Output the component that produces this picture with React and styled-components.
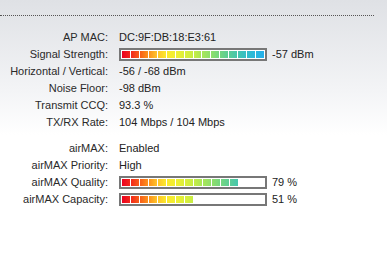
import React from 'react';
import styled, { createGlobalStyle } from 'styled-components';

const GlobalStyle = createGlobalStyle`
  html, body {
    margin: 0;
    padding: 0;
  }
  body {
    width: 387px;
    height: 260px;
    overflow: hidden;
    background: linear-gradient(to bottom, #dfe1e5 0px, #f3f4f6 90px, #ffffff 135px, #ffffff 260px);
    font-family: "Liberation Sans", Arial, sans-serif;
    font-size: 11px;
    color: #222;
  }
`;

const Panel = styled.div`
  padding-top: 15px;
`;

const Divider = styled.div`
  width: 374px;
  border-top: 1px dotted #555;
  margin-bottom: 13px;
`;

const InfoTable = styled.div`
  display: grid;
  grid-template-columns: 108px auto;
  column-gap: 11px;
  margin-bottom: ${(p) => p.$spaceAfter || 0}px;
`;

const Label = styled.div`
  text-align: right;
  height: 17px;
  line-height: 17px;
  white-space: nowrap;
  color: #2a2a2a;
`;

const Value = styled.div`
  height: 17px;
  line-height: 17px;
  display: flex;
  align-items: center;
  gap: 5px;
  white-space: nowrap;
`;

const Bar = styled.div`
  box-sizing: border-box;
  width: 148px;
  height: 13px;
  border: 2px solid #777;
  background: #fff;
  padding: 1px;
  display: flex;
  gap: 1px;
`;

const Segment = styled.span`
  width: 8px;
  height: 100%;
  background: linear-gradient(to right, ${(p) => p.$from}, ${(p) => p.$to});
`;

const COLORS = [
  '#ec0020', '#f2271b', '#f85d18', '#fc921c', '#fec42a', '#fbe92c',
  '#f1ef33', '#dcef3a', '#c6ed45', '#a9e658', '#90df6a', '#74d680',
  '#5bcd96', '#45c6ad', '#34bec8', '#2ab6de', '#24b0ea',
];

function LevelBar({ filled }) {
  const segs = [];
  for (let i = 0; i < filled; i++) {
    segs.push(<Segment key={i} $from={COLORS[i]} $to={COLORS[i + 1]} />);
  }
  return <Bar>{segs}</Bar>;
}

const wirelessRows = [
  { label: 'AP MAC:', value: 'DC:9F:DB:18:E3:61' },
  { label: 'Signal Strength:', bar: 16, value: '-57 dBm' },
  { label: 'Horizontal / Vertical:', value: '-56 / -68 dBm' },
  { label: 'Noise Floor:', value: '-98 dBm' },
  { label: 'Transmit CCQ:', value: '93.3 %' },
  { label: 'TX/RX Rate:', value: '104 Mbps / 104 Mbps' },
];

const airmaxRows = [
  { label: 'airMAX:', value: 'Enabled' },
  { label: 'airMAX Priority:', value: 'High' },
  { label: 'airMAX Quality:', bar: 13, value: '79 %' },
  { label: 'airMAX Capacity:', bar: 8, value: '51 %' },
];

function InfoRows({ rows }) {
  return rows.map((row) => (
    <React.Fragment key={row.label}>
      <Label>{row.label}</Label>
      <Value>
        {row.bar !== undefined && <LevelBar filled={row.bar} />}
        {row.value}
      </Value>
    </React.Fragment>
  ));
}

export default function App() {
  return (
    <Panel>
      <GlobalStyle />
      <Divider />
      <InfoTable $spaceAfter={9}>
        <InfoRows rows={wirelessRows} />
      </InfoTable>
      <InfoTable>
        <InfoRows rows={airmaxRows} />
      </InfoTable>
    </Panel>
  );
}
